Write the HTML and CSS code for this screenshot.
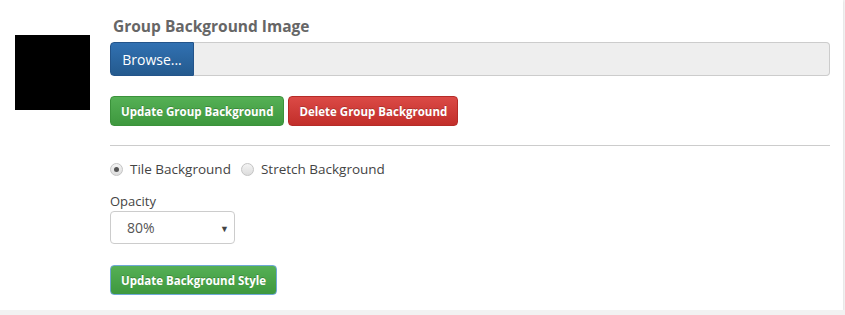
FILE: index.html
```html
<!DOCTYPE html>
<html lang="en">

<head>
    <meta charset="UTF-8" />
    <meta name="viewport" content="width=device-width, initial-scale=1.0" />
    <title>Group Background</title>
    <link rel="stylesheet" href="styles.css">
</head>

<body>
    <div class="panel">
        <!-- Miniatura do fundo atual -->
        <div class="thumb"></div>

        <div class="settings">
            <h3 class="title">Group Background Image</h3>

            <div class="file-input">
                <span class="btn btn-primary browse">Browse...</span>
                <span class="file-name"></span>
            </div>

            <div class="actions">
                <button class="btn btn-success">Update Group Background</button>
                <button class="btn btn-danger">Delete Group Background</button>
            </div>

            <hr class="divider">

            <div class="radios">
                <label class="radio"><input type="radio" name="mode" checked> Tile Background</label>
                <label class="radio"><input type="radio" name="mode"> Stretch Background</label>
            </div>

            <label class="field-label" for="opacity">Opacity</label>
            <div class="select-wrap">
                <select id="opacity">
                    <option>100%</option>
                    <option>90%</option>
                    <option selected>80%</option>
                    <option>70%</option>
                    <option>60%</option>
                </select>
            </div>

            <button class="btn btn-success btn-focus">Update Background Style</button>
        </div>
    </div>
</body>

</html>
```

FILE: styles.css
```css
body {
    margin: 0;
    background-color: #f2f2f2;
    font-family: 'Open Sans', 'Liberation Sans', sans-serif;
    color: #444;
}

.panel {
    background: #fff;
    width: 843px;
    height: 310px;
    display: flex;
    box-shadow: 0 1px 2px rgba(0, 0, 0, 0.12);
    box-sizing: border-box;
    padding: 16px 0 0 15px;
}

.thumb {
    width: 75px;
    height: 75px;
    background: #000;
    margin-top: 19px;
    flex-shrink: 0;
}

.settings {
    margin-left: 20px;
    width: 720px;
    display: flex;
    flex-direction: column;
    align-items: flex-start;
}

.title {
    margin: 0 0 6px 3px;
    font-size: 15.5px;
    line-height: 20px;
    font-weight: 700;
    color: #666;
}

.file-input {
    display: flex;
    width: 720px;
    height: 34px;
}

.btn {
    font-family: inherit;
    border: 1px solid transparent;
    border-radius: 4px;
    color: #fff;
    cursor: pointer;
    box-sizing: border-box;
}

.browse {
    display: flex;
    align-items: center;
    justify-content: center;
    width: 84px;
    height: 34px;
    font-size: 14px;
    border-radius: 4px 0 0 4px;
}

.btn-primary {
    background: linear-gradient(#3171b2, #245a8e);
    border-color: #23548a;
}

.file-name {
    flex: 1;
    background: #eee;
    border: 1px solid #ccc;
    border-left: 0;
    border-radius: 0 4px 4px 0;
}

.actions {
    display: flex;
    gap: 4px;
    margin-top: 20px;
}

.actions .btn,
.btn-focus {
    height: 30px;
    padding: 0 10px;
    font-size: 11.5px;
    font-weight: 700;
    text-shadow: 0 -1px 0 rgba(0, 0, 0, 0.2);
}

.btn-success {
    background: linear-gradient(#55b055, #3e983e);
    border-color: #3b923b;
}

.btn-danger {
    background: linear-gradient(#db4a46, #c22e2a);
    border-color: #b52b27;
}

.divider {
    width: 720px;
    margin: 19px 0 0 0;
    border: 0;
    border-top: 1px solid #ccc;
}

.radios {
    display: flex;
    gap: 10px;
    margin-top: 13px;
    font-size: 13.5px;
}

.radio {
    display: flex;
    align-items: center;
    gap: 7px;
    line-height: 20px;
}

.radio input {
    appearance: none;
    margin: 0;
    width: 13px;
    height: 13px;
    border-radius: 50%;
    border: 1px solid #c4c4c4;
    background: linear-gradient(#f4f4f4, #dcdcdc);
    box-sizing: border-box;
    display: grid;
    place-content: center;
}

.radio input:checked::before {
    content: "";
    width: 5px;
    height: 5px;
    border-radius: 50%;
    background: #555;
}

.field-label {
    margin-top: 13px;
    font-size: 13px;
    line-height: 18px;
}

.select-wrap {
    position: relative;
    margin-top: 1px;
}

.select-wrap select {
    appearance: none;
    width: 125px;
    height: 33px;
    padding: 0 0 0 16px;
    border: 1px solid #ccc;
    border-radius: 4px;
    background: #fff;
    font-family: inherit;
    font-size: 14px;
    color: #555;
}

.select-wrap::after {
    content: "\25BC";
    position: absolute;
    right: 6px;
    top: 11px;
    font-size: 9px;
    color: #444;
    pointer-events: none;
}

.btn-focus {
    margin-top: 21px;
    border-color: #6fa8d6;
}
```
